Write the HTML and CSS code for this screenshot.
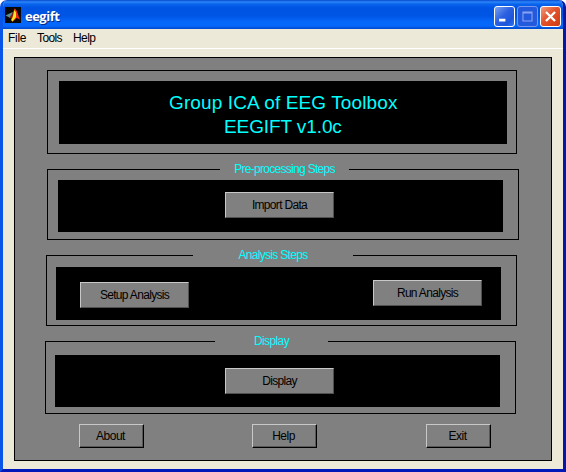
FILE: index.html
```html
<!DOCTYPE html>
<html lang="en">
<head>
<meta charset="utf-8">
<title>eegift</title>
<link rel="stylesheet" href="styles.css">
</head>
<body>
<div class="window">
  <header class="titlebar">
    <svg class="logo" width="16" height="16" viewBox="0 0 16 16">
      <rect width="16" height="16" fill="#080808"/>
      <path d="M0.500 8.500L4.500 6.500L8 5L6.500 8.500L5 11L3.500 10z" fill="#5a8f94"/>
      <path d="M4.500 10.500L7 7L9.500 2L9 10L7 12.500L5.500 11z" fill="#8c2010"/>
      <path d="M9.500 1.500C12.500 2.500 13 9 15 12.500L11.800 11L7.500 14.800L6 13C8.500 10.500 8 5 9.500 1.500z" fill="#f02c10"/>
      <path d="M9.300 3L11 5.500L11 10L7.500 14.500L6.200 13C8.500 10 8.500 6 9.300 3z" fill="#ffe820"/>
    </svg>
    <h1 class="caption">eegift</h1>
    <div class="controls">
      <svg class="control minimize" viewBox="0 0 21 21"><path d="M4.500 13h7v3h-7z" fill="#fff"/></svg>
      <svg class="control maximize" viewBox="0 0 21 21"><path d="M5.500 5.500h10v10h-10zM5 6.500h11" fill="none" stroke="#8aa4f0" stroke-width="1.200"/></svg>
      <svg class="control close" viewBox="0 0 21 21"><path d="M5.500 5.500l10 10M15.500 5.500l-10 10" fill="none" stroke="#fff" stroke-width="2.600"/></svg>
    </div>
  </header>
  <nav class="menu"><span class="file">File</span><span class="tools">Tools</span><span class="help">Help</span></nav>
  <main class="panel">
    <section class="frame intro">
      <div class="well heading"><div class="line1">Group ICA of EEG Toolbox</div><div class="line2">EEGIFT v1.0c</div></div>
    </section>
    <section class="frame preprocess">
      <h2 class="legend"><span>Pre-processing Steps</span></h2>
      <div class="well"><button class="step"><span>Import Data</span></button></div>
    </section>
    <section class="frame analysis">
      <h2 class="legend"><span>Analysis Steps</span></h2>
      <div class="well"><button class="step setup"><span>Setup Analysis</span></button><button class="step"><span>Run Analysis</span></button></div>
    </section>
    <section class="frame display">
      <h2 class="legend"><span>Display</span></h2>
      <div class="well"><button class="step"><span>Display</span></button></div>
    </section>
    <footer class="actions"><button>About</button><button>Help</button><button>Exit</button></footer>
  </main>
</div>
</body>
</html>
```
FILE: styles.css
```css
* { box-sizing: border-box; }
body { margin: 0; background: #fff; font-family: "Liberation Sans", Arial, sans-serif; overflow: hidden; }
.window {
  width: 566px; height: 472px; overflow: hidden;
  border: solid; border-width: 0 3px 3px; border-color: #0a50e0 #0019a8 #0019b8 #0855e8;
  border-radius: 7px 7px 0 0; background: #ece9d8;
}
.titlebar {
  height: 29px; margin: 0 -3px; padding: 1px 5px 0; display: flex; align-items: center;
  background: linear-gradient(#0848d0 0, #2c86f8 2px, #0a64ee 4px, #0054e3 8px, #0055e5 16px, #0668fa 22px, #0668fa 26px, #0048cc 29px);
}
.logo { flex: none; }
.caption { margin: 2px 0 0 4px; font: bold 13px/18px "Open Sans", sans-serif; letter-spacing: -0.5px; color: #fff; text-shadow: 1px 1px #0a2880; }
.controls { display: flex; gap: 2px; margin: 2px 0 0 auto; }
.control { width: 21px; height: 21px; border: 1px solid #fff; border-radius: 3px; }
.minimize { background: linear-gradient(135deg, #7ba2f2, #2b60e0 45%, #1d55dc 75%, #2f78f0); }
.maximize { background: #2359dc; border-color: #7898ee; }
.close { background: linear-gradient(135deg, #f09a80, #e2532c 45%, #d84318 80%, #c93c14); }
.menu { height: 20px; display: flex; padding-left: 5px; border-bottom: 1px solid #fff; font-size: 12px; line-height: 19px; color: #000; }
.menu span { letter-spacing: -0.6px; }
.menu .file { width: 29px; letter-spacing: -0.3px; }
.menu .tools { width: 36px; }
.panel { width: 538px; height: 404px; margin: 8px 0 0 11px; border: 1px solid #000; background: #808080; padding-top: 12px; }
.frame { border: 1px solid #000; }
.well { background: #000; display: flex; }
.intro { width: 470px; height: 84px; margin-left: 32px; padding: 10px 0 0 11px; }
.heading { width: 448px; height: 63px; flex-direction: column; padding-top: 10px; color: #0ff; font-size: 19px; line-height: 24px; }
.heading div { white-space: nowrap; }
.line1 { margin-left: 110px; letter-spacing: 0.12px; }
.line2 { margin-left: 165px; letter-spacing: -0.1px; }
.legend { margin: -8px 0 0; height: 14px; font-size: 12px; font-weight: 400; line-height: 14px; color: #0ff; background: #808080; white-space: nowrap; text-align: center; }
.preprocess { width: 472px; height: 71px; margin: 15px 0 0 32px; }
.preprocess .legend { width: 129px; margin-left: 172px; letter-spacing: -0.7px; }
.preprocess .well { width: 445px; height: 52px; margin: 4px 0 0 10px; padding: 12px 0 0 167px; }
.analysis { width: 471px; height: 71px; margin: 15px 0 0 31px; }
.analysis .legend { width: 160px; margin-left: 146px; letter-spacing: -0.7px; }
.analysis .well { width: 445px; height: 53px; margin: 5px 0 0 9px; padding: 13px 19px 0 24px; justify-content: space-between; }
.analysis .setup { margin-top: 2px; }
.display { width: 471px; height: 73px; margin: 15px 0 0 30px; }
.display .legend { width: 113px; margin-left: 169px; letter-spacing: -0.6px; }
.display .well { width: 445px; height: 52px; margin: 7px 0 0 9px; padding: 13px 0 0 170px; }
button {
  flex: none; padding: 0 2px 0 0; background: #808080; color: #000;
  font: 12px/14px "Liberation Sans", Arial, sans-serif; letter-spacing: -0.5px; white-space: nowrap;
  border: 1px solid; border-color: #c8c8c8 #505050 #505050 #c8c8c8; border-radius: 0;
}
.step { width: 109px; height: 26px; padding-right: 0; letter-spacing: -0.68px; }
.actions { display: flex; margin: 10px 0 0 64px; width: 412px; gap: 108px; }
.actions button { width: 65px; height: 24px; border-color: #c8c8c8 #000 #000 #c8c8c8; box-shadow: inset -1px -1px #585858; }
.actions button:last-child { margin-left: 1px; }
```
